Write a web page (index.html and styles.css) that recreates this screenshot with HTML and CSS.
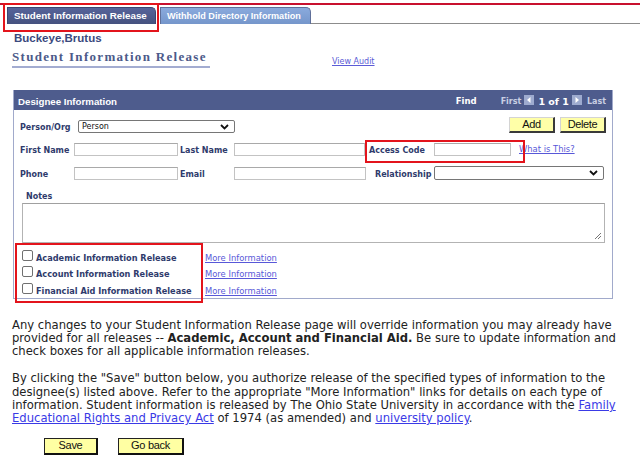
FILE: index.html
```html
<!DOCTYPE html>
<html>
<head>
<meta charset="utf-8">
<title>Student Information Release</title>
<link rel="stylesheet" href="styles.css">
</head>
<body>
<div class="topline"></div>
<div class="tabs">
  <div class="tab active">Student Information Release</div>
  <div class="tab other">Withhold Directory Information</div>
  <div class="tabfill"></div>
</div>
<div class="name">Buckeye,Brutus</div>
<div class="titlerow">
  <h1 class="title">Student Information Release</h1>
  <a class="audit" href="#">View Audit</a>
</div>

<div class="box">
  <div class="boxhead">
    <span class="bh-title">Designee Information</span>
    <span class="find">Find</span>
    <span class="nav">First</span>
    <span class="arrowbox"><svg width="10" height="10" viewBox="0 0 10 10"><rect width="10" height="10" fill="#9eabcf"/><path d="M6.5 2 L3 5 L6.5 8 Z" fill="#fff"/></svg></span>
    <span class="count">1 of 1</span>
    <span class="arrowbox"><svg width="10" height="10" viewBox="0 0 10 10"><rect width="10" height="10" fill="#9eabcf"/><path d="M3.5 2 L7 5 L3.5 8 Z" fill="#fff"/></svg></span>
    <span class="nav last">Last</span>
  </div>
  <div class="boxbody">
    <div class="row r1">
      <span class="lbl w58">Person/Org</span>
      <div class="sel selperson"><span>Person</span><svg width="9" height="6" viewBox="0 0 9 6"><path d="M1 1 L4.5 4.5 L8 1" fill="none" stroke="#111" stroke-width="1.8"/></svg></div>
      <div class="spacer"></div>
      <button class="btn">Add</button>
      <button class="btn del">Delete</button>
    </div>
    <div class="row r2">
      <span class="lbl w54">First Name</span>
      <span class="inp w104"></span>
      <span class="lbl w54 ml2">Last Name</span>
      <span class="inp w131"></span>
      <span class="lbl w65 ml4">Access Code</span>
      <span class="inp w77"></span>
      <a class="small-link whatis" href="#">What is This?</a>
    </div>
    <div class="row r3">
      <span class="lbl w54">Phone</span>
      <span class="inp w104"></span>
      <span class="lbl w54 ml2">Email</span>
      <span class="inp w132"></span>
      <span class="lbl w59 ml9">Relationship</span>
      <div class="sel selrel"><span></span><svg width="9" height="6" viewBox="0 0 9 6"><path d="M1 1 L4.5 4.5 L8 1" fill="none" stroke="#111" stroke-width="1.8"/></svg></div>
    </div>
    <div class="notes-lbl lbl">Notes</div>
    <div class="notes"><svg class="grip" width="8" height="8" viewBox="0 0 8 8"><path d="M7 1 L1 7 M7 4 L4 7" stroke="#777" stroke-width="1"/></svg></div>
    <div class="checks">
      <div class="crow"><span class="cbcell"><span class="cb"></span><span class="cblbl">Academic Information Release</span></span><a class="small-link" href="#">More Information</a></div>
      <div class="crow"><span class="cbcell"><span class="cb"></span><span class="cblbl">Account Information Release</span></span><a class="small-link" href="#">More Information</a></div>
      <div class="crow"><span class="cbcell"><span class="cb"></span><span class="cblbl">Financial Aid Information Release</span></span><a class="small-link" href="#">More Information</a></div>
    </div>
  </div>
</div>

<p class="para">Any changes to your Student Information Release page will override information you may already have<br>provided for all releases -- <b>Academic, Account and Financial Aid.</b> Be sure to update information and<br>check boxes for all applicable information releases.</p>
<p class="para p2">By clicking the "Save" button below, you authorize release of the specified types of information to the<br>designee(s) listed above. Refer to the appropriate "More Information" links for details on each type of<br>information. Student information is released by The Ohio State University in accordance with the <a href="#">Family<br>Educational Rights and Privacy Act</a> of 1974 (as amended) and <a href="#">university policy</a>.</p>

<div class="actions">
  <button class="bigbtn save">Save</button>
  <button class="bigbtn back">Go back</button>
</div>

<div class="annot an1"></div>
<div class="annot an2"></div>
<div class="annot an3"></div>
</body>
</html>
```
FILE: styles.css
```css
* { box-sizing: border-box; }
html, body { margin: 0; padding: 0; }
body {
  width: 640px;
  height: 462px;
  overflow: hidden;
  position: relative;
  background: #fff;
  font-family: "DejaVu Sans", Verdana, sans-serif;
  color: #222;
}
.topline { height: 2px; margin-top: 3px; background: #c8102e; }
.tabs { display: flex; align-items: flex-end; height: 17px; margin-top: 2px; padding-left: 7px; }
.tab {
  height: 17px;
  font: bold 9.8px/16px "Liberation Sans", Arial, sans-serif;
  color: #fff;
  padding-left: 6px;
  border: 1px solid #3b4570;
  border-bottom: none;
  border-radius: 0 5px 0 0;
  white-space: nowrap;
  overflow: hidden;
}
.tab.active { width: 149px; background: linear-gradient(#56639a, #45527f); }
.tab.other { width: 151px; margin-left: 4px; font-size: 9.1px; background: linear-gradient(#8aaadd, #7596cb); border-color: #5f6f99; }
.tabfill { flex: 1; height: 17px; border-bottom: 1px solid #8c8c8c; }

.name { font: bold 11.5px/14px "Liberation Sans", Arial, sans-serif; color: #3b4a7e; padding-left: 14px; margin-top: 7px; }
.titlerow { display: flex; align-items: flex-start; margin-top: 4px; }
.title {
  margin: 0 0 0 12px;
  width: 198px;
  font: bold 13px/16px "Liberation Serif", "Times New Roman", serif;
  letter-spacing: 1.3px;
  color: #4c5a8a;
  padding-bottom: 1px;
  border-bottom: 2px solid #a3acd1;
  white-space: nowrap;
}
.audit { margin: 8px 0 0 122px; font-size: 8px; line-height: 10px; color: #5b5bd6; }

.box { margin: 22px 0 0 13px; width: 600px; border: 1px solid #a1aacb; border-top: none; }
.boxhead {
  height: 20px;
  background: #4e5c8d;
  display: flex;
  align-items: center;
  padding: 2px 6px 0 4px;
  color: #fff;
  white-space: nowrap;
}
.bh-title { font: bold 9.7px "Liberation Sans", Arial, sans-serif; }
.find { font-weight: bold; font-size: 8.5px; margin-left: auto; }
.nav { font-weight: bold; font-size: 8px; color: #c9cfe3; margin-left: 24px; }
.nav.last { margin-left: 5px; }
.arrowbox { display: flex; margin-left: 3px; margin-top: -3px; }
.count { font-weight: bold; font-size: 9.5px; margin-left: 4px; }

.boxbody { padding: 0 6px 0 6px; }
.row { display: flex; align-items: flex-end; }
.r1 { margin-top: 7px; height: 16px; }
.r2 { margin-top: 10px; }
.r3 { margin-top: 10px; }
.lbl { font-weight: bold; font-size: 8px; line-height: 10px; color: #2f3b6c; white-space: nowrap; flex: none; }
.w54 { width: 54px; }
.w58 { width: 58px; }
.w59 { width: 59px; }
.w65 { width: 65px; }
.ml2 { margin-left: 2px; }
.ml4 { margin-left: 4px; }
.ml9 { margin-left: 9px; }
.inp { height: 13px; border: 1px solid #c3c3c3; border-top-color: #a9a9a9; background: #fff; flex: none; }
.w104 { width: 104px; }
.w131 { width: 131px; }
.w132 { width: 132px; }
.w77 { width: 77px; }
.sel {
  display: flex;
  align-items: center;
  justify-content: space-between;
  height: 13px;
  border: 1px solid #767676;
  border-radius: 2px;
  padding: 0 5px 0 3px;
  font-size: 8px;
  color: #111;
  background: #fff;
  flex: none;
}
.selperson { width: 157px; }
.selrel { width: 170px; height: 14px; }
.spacer { flex: 1; }
.btn {
  font: 11px/13px "Liberation Sans", Arial, sans-serif;
  letter-spacing: -0.4px;
  width: 46px;
  height: 16px;
  padding: 0;
  background: #ffffa8;
  color: #111;
  border: 1px solid #d4d4d4;
  border-right: 2px solid #3a3a3a;
  border-bottom: 2px solid #3a3a3a;
  align-self: flex-start;
}
.del { margin-left: 5px; }
.small-link { font-size: 8.4px; line-height: 10px; color: #5858d8; text-decoration: underline; white-space: nowrap; }
.whatis { margin-left: 8px; margin-bottom: 2px; }
.notes-lbl { margin: 12px 0 0 6px; }
.notes { margin: 1px 0 0 2px; width: 583px; height: 40px; border: 1px solid #b3b3b3; border-top-color: #a0a0a0; position: relative; }
.grip { position: absolute; right: 2px; bottom: 2px; }
.checks { margin-top: 3px; padding-bottom: 2px; }
.crow { display: flex; align-items: flex-end; height: 16.5px; }
.cbcell { display: flex; align-items: flex-end; width: 183px; margin-left: 2px; flex: none; }
.cb { width: 11px; height: 11px; border: 1px solid #707070; border-radius: 2px; margin-bottom: 2px; flex: none; }
.cblbl { font-weight: bold; font-size: 8.2px; line-height: 10px; color: #2f3b6c; margin-left: 3px; white-space: nowrap; }

.para { margin: 20px 0 0 12px; font-size: 11.6px; line-height: 13.3px; color: #222; white-space: nowrap; }
.para.p2 { margin-top: 14px; }
.para a { color: #3a3ae6; }
.actions { display: flex; margin: 12px 0 0 44px; }
.bigbtn {
  height: 17px;
  padding: 0;
  font: 11px/13px "Liberation Sans", Arial, sans-serif;
  letter-spacing: -0.3px;
  color: #111;
  background: #ffffa3;
  border: 1px solid #222;
  border-right: 2px solid #111;
  border-bottom: 2px solid #111;
}
.save { width: 54px; }
.back { width: 66px; margin-left: 20px; }

.annot { position: absolute; border: 2px solid #e3141c; pointer-events: none; }
.an1 { left: 3px; top: 3px; width: 156px; height: 29px; }
.an2 { left: 365px; top: 140px; width: 160px; height: 23px; }
.an3 { left: 15px; top: 243px; width: 188px; height: 60px; }
```
